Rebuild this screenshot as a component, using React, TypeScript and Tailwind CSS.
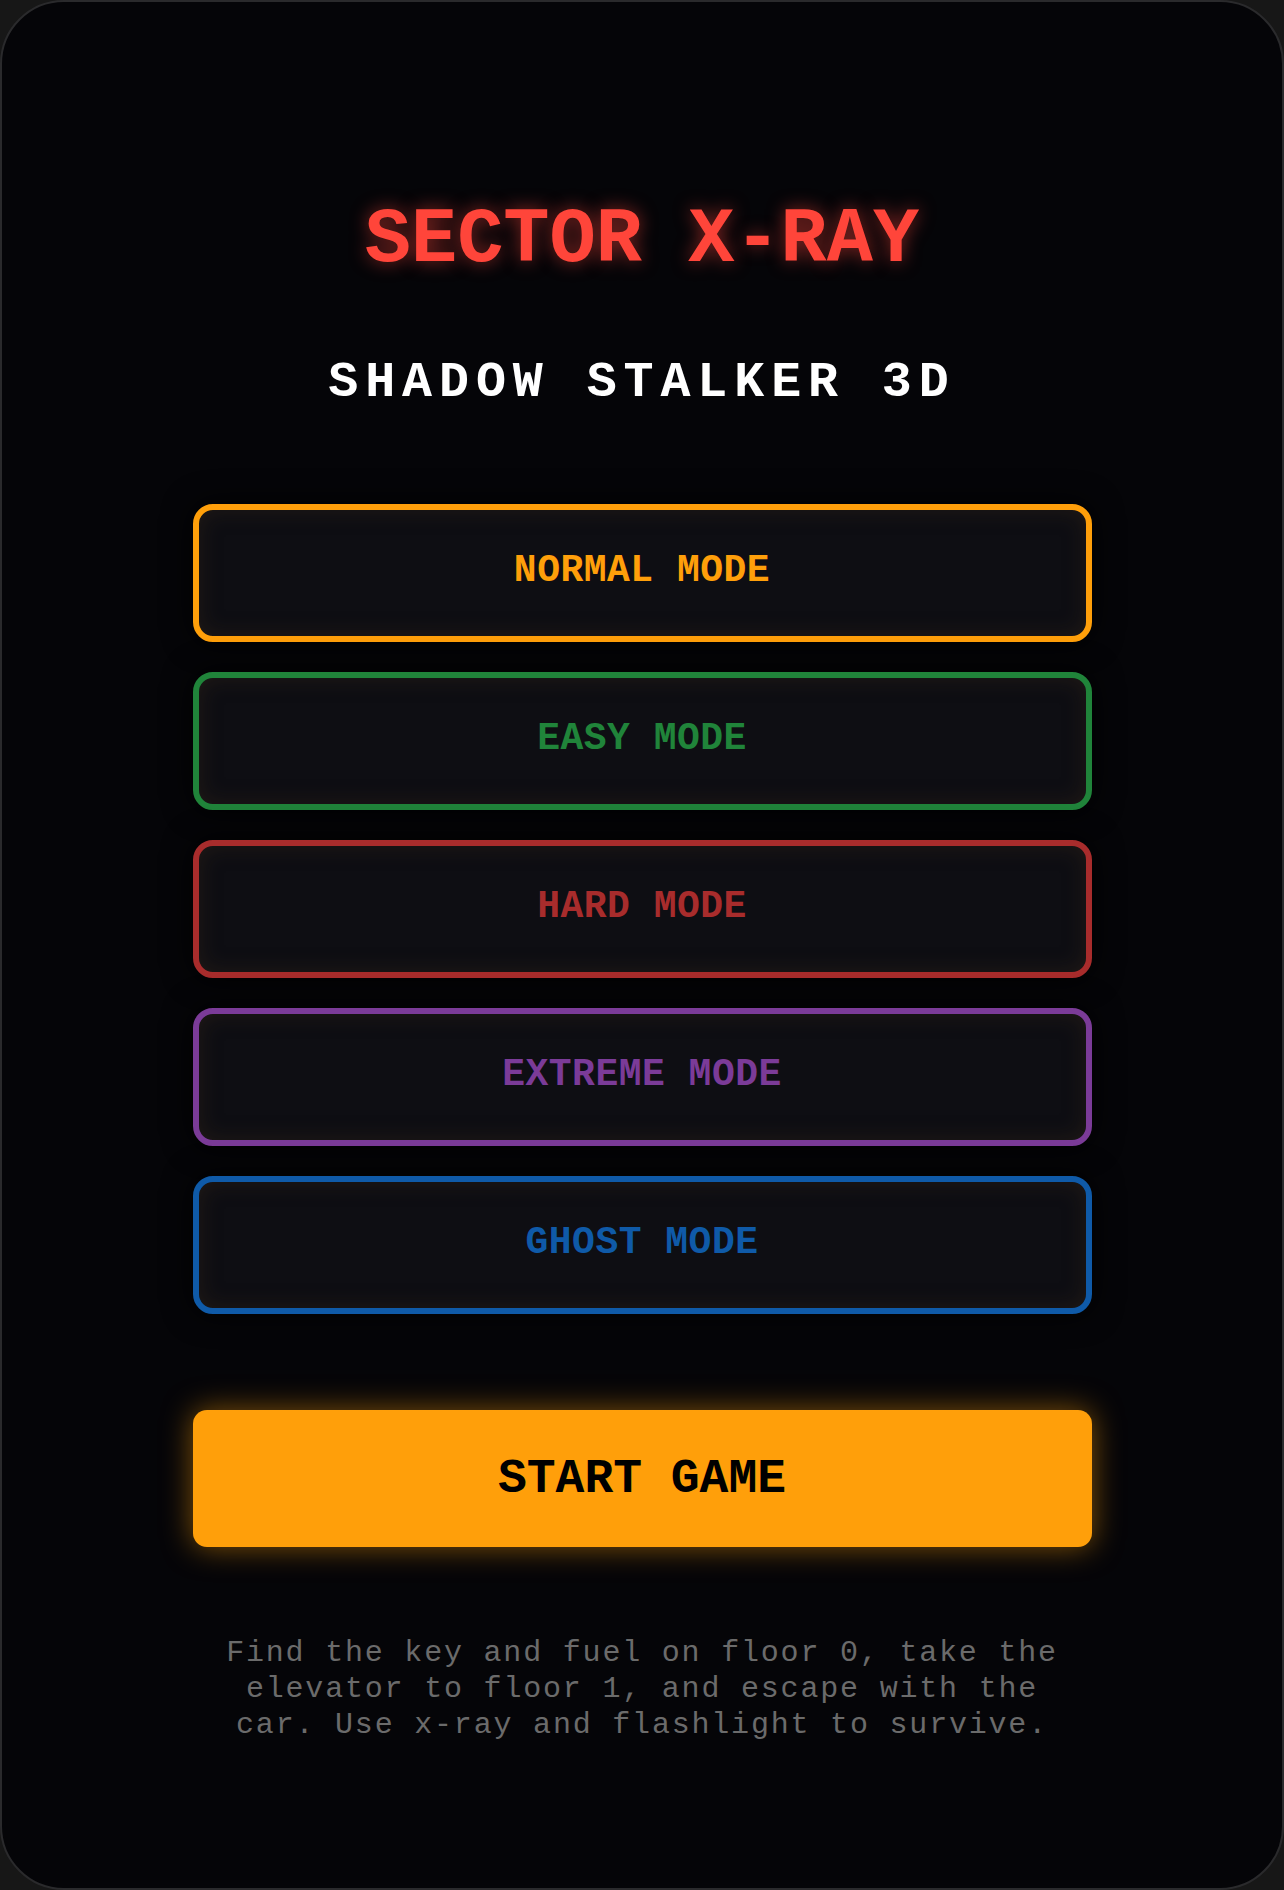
import React from 'react';

type Mode = {
  label: string;
  cls: string;
};

const modes: Mode[] = [
  { label: 'NORMAL MODE', cls: 'border-[#ff9f0a] text-[#ff9f0a]' },
  { label: 'EASY MODE', cls: 'border-[#20843a] text-[#20843a]' },
  { label: 'HARD MODE', cls: 'border-[#a82c2c] text-[#a82c2c]' },
  { label: 'EXTREME MODE', cls: 'border-[#7b3b98] text-[#7b3b98]' },
  { label: 'GHOST MODE', cls: 'border-[#0f5aa8] text-[#0f5aa8]' },
];

const mono = "font-['Liberation_Mono','DejaVu_Sans_Mono',monospace]";

export default function App() {
  return (
    <div className="min-h-screen bg-[#171717]">
      <div
        className={`${mono} flex h-[1890px] flex-col items-center rounded-[64px] border-2 border-[#2a2a2c] bg-[#050508] pt-[200px]`}
      >
        {/* titre */}
        <h1 className="text-[77px] leading-none font-bold text-[#ff453a] [text-shadow:0_0_18px_rgba(255,69,58,0.55)]">
          SECTOR X-RAY
        </h1>
        <h2 className="mt-[79px] text-[50px] leading-none font-bold tracking-[6.9px] text-white">
          SHADOW STALKER 3D
        </h2>

        {/* modes */}
        <div className="mt-[96px] flex w-[899px] flex-col gap-[30px]">
          {modes.map((m) => (
            <button
              key={m.label}
              className={`flex h-[138px] items-center justify-center rounded-[20px] border-[6px] bg-[#0e0e13] pb-[5px] text-[38px] font-bold tracking-[0.5px] shadow-[0_0_30px_rgba(0,0,0,0.95),inset_0_0_22px_rgba(70,50,30,0.35)] ${m.cls}`}
            >
              {m.label}
            </button>
          ))}
        </div>

        <button className="mt-[96px] flex h-[137px] w-[899px] items-center justify-center rounded-[14px] bg-[#ff9f0a] text-[48px] font-bold text-black shadow-[0_0_30px_rgba(255,159,10,0.5)]">
          START GAME
        </button>

        <p className="mt-[88px] w-[856px] text-center text-[30px] leading-[36px] tracking-[1.8px] text-[#6b6b6b]">
          Find the key and fuel on floor 0, take the elevator to floor 1, and escape with the car. Use x-ray and flashlight to survive.
        </p>
      </div>
    </div>
  );
}
